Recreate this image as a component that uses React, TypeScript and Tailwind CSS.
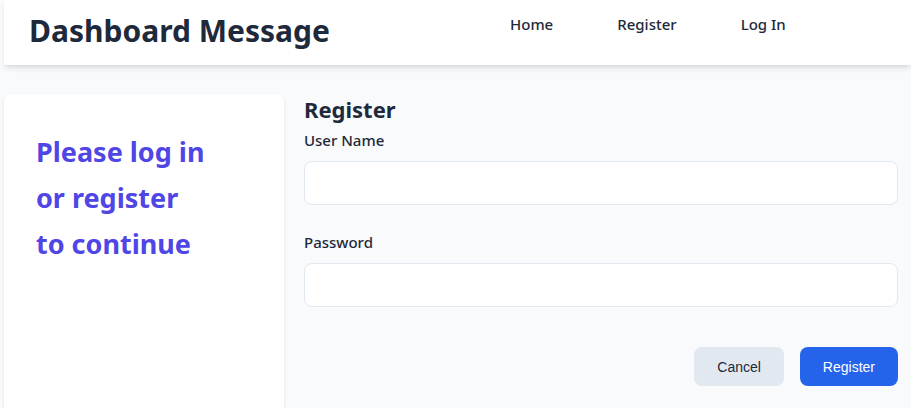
import { useState } from "react";

function Header() {
  return (
    <div className="flex flex-row items-center h-[65px] bg-white shadow-md pl-[25px]">
      <div className="w-[481px] text-[30px] font-bold text-[#1e293b] leading-none pb-[4px]">
        Dashboard Message
      </div>
      <nav className="flex flex-row gap-x-[64px] text-[15px] font-medium text-[#1e293b] pb-[16px]">
        <a href="#">Home</a>
        <a href="#">Register</a>
        <a href="#">Log In</a>
      </nav>
    </div>
  );
}

function App() {
  const [userName, setUserName] = useState("");
  const [password, setPassword] = useState("");

  return (
    <div
      className="min-h-[408px] bg-[#f8fafc] pl-1 overflow-hidden"
      style={{ fontFamily: '"Noto Sans", "Open Sans", sans-serif' }}
    >
      <Header />
      <div className="flex flex-row gap-x-5 mt-[29px]">
        <div className="w-[280px] h-[320px] shrink-0 rounded-lg bg-white shadow-sm pt-[35px] pl-8">
          <div className="text-[27px] font-bold text-[#4f46e5] leading-[46px]">
            Please log in
            <br />
            or register
            <br />
            to continue
          </div>
        </div>
        <div className="flex flex-col flex-1 pr-[13px]">
          <h2 className="text-[22px] font-bold text-[#1e293b] leading-[30px]">
            Register
          </h2>
          <form className="flex flex-col">
            <label className="text-[15px] font-medium text-[#1e293b] mt-[5px]">
              User Name
            </label>
            <input
              className="h-[44px] mt-[9px] rounded-lg border border-[#e2e8f0] bg-white px-3"
              value={userName}
              onChange={(e) => setUserName(e.target.value)}
              type="text"
            />
            <label className="text-[15px] font-medium text-[#1e293b] mt-[26px]">
              Password
            </label>
            <input
              className="h-[44px] mt-[10px] rounded-lg border border-[#e2e8f0] bg-white px-3"
              value={password}
              onChange={(e) => setPassword(e.target.value)}
              type="password"
            />
            <div
              className="flex flex-row justify-end gap-x-4 mt-[40px]"
              style={{ fontFamily: '"Liberation Sans", Arial, sans-serif' }}
            >
              <button
                type="button"
                className="h-[39px] px-[23px] rounded-lg bg-[#e2e8f0] text-sm text-[#1e293b]"
              >
                Cancel
              </button>
              <button
                type="submit"
                className="h-[39px] px-[23px] rounded-lg bg-[#2563eb] text-sm text-white"
              >
                Register
              </button>
            </div>
          </form>
        </div>
      </div>
    </div>
  );
}

export default App;
